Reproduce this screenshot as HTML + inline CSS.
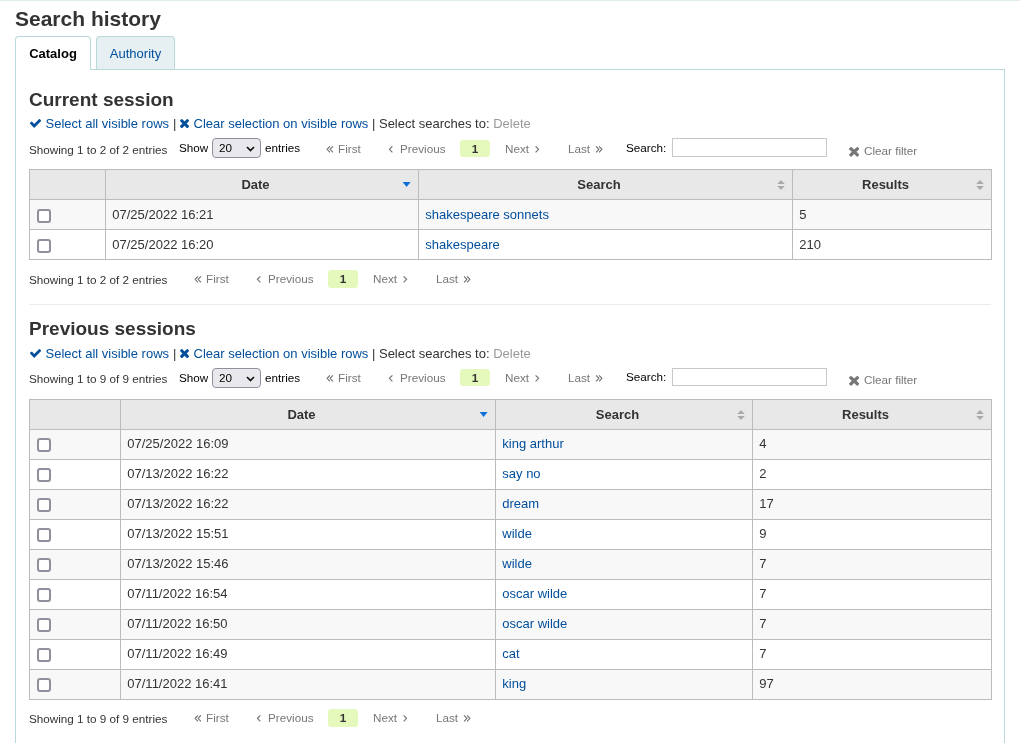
<!DOCTYPE html>
<html><head><meta charset="utf-8"><style>
*{box-sizing:border-box;}
html,body{margin:0;padding:0;background:#fff;}
body{font-family:"Liberation Sans",sans-serif;font-size:13px;color:#333;width:1020px;height:743px;overflow:hidden;position:relative;}
a{color:#004e9c;text-decoration:none;}
#wrap{position:absolute;left:0;top:0;width:1020px;height:743px;will-change:transform;}
.t{position:absolute;white-space:nowrap;}
.ic{position:absolute;}
.topline{position:absolute;left:0;top:0;width:1020px;height:1px;background:#e1eded;}
.h1{font-size:21px;font-weight:bold;line-height:26px;color:#333;}
.h2{font-size:19px;font-weight:bold;line-height:22px;color:#333;}
.lk{font-size:13px;line-height:16px;color:#333;}
.dis{color:#999;}
.sm{font-size:11.7px;line-height:16px;color:#333;}
.blk{color:#000;}
.gr{color:#777;}
.tab{position:absolute;top:36px;height:34px;border:1px solid #b9d8d9;border-bottom:none;border-radius:4px 4px 0 0;font-size:13px;line-height:34px;text-align:center;}
.tab1{left:15px;width:76px;background:#fff;color:#000;font-weight:bold;z-index:2;}
.tab2{left:96px;width:79px;height:33px;background:#e6f0f2;color:#004e9c;}
.panel{position:absolute;left:15px;top:69px;width:990px;height:700px;border:1px solid #b9d8d9;}
.sel{position:absolute;width:49px;height:20px;border:1px solid #8f8f9d;border-radius:4px;background:#e9e9ed;font-size:11.7px;line-height:18px;color:#000;}
.sel span{position:absolute;left:6px;top:0;}
.inp{position:absolute;width:155px;height:19px;border:1px solid #c8c8c8;background:#fff;}
.cur{position:absolute;width:30px;height:17px;line-height:17px;background:#e6f9bd;border-radius:3px;font-weight:bold;color:#333;text-align:center;font-size:11.7px;}
table{position:absolute;left:29px;border-collapse:collapse;table-layout:fixed;font-size:13px;width:962px;}
td,th{border:1px solid #bcbcbc;height:30px;padding:0 0 0 6.3px;text-align:left;color:#333;white-space:nowrap;}
th{background:#e8e8e8;font-weight:bold;text-align:center;position:relative;padding:0 20px 0 7px;}
tr.odd td{background:#f8f8f8;}
.cb{display:inline-block;width:14px;height:14px;border:2px solid #8f8f9d;border-radius:3px;vertical-align:middle;margin-left:0.7px;position:relative;top:1px;background:#fff;}
.si{position:absolute;right:7px;top:10px;}
.t2 td{padding-bottom:2px;}
.hr{position:absolute;left:29px;width:962px;height:1px;background:#ebebeb;}
</style></head><body><div id="wrap">
<div class="topline"></div>
<div class="t h1" style="left:15px;top:6px;">Search history</div>
<div class="tab tab1">Catalog</div><div class="tab tab2">Authority</div><div class="panel"></div>
<div class="t h2" style="left:29px;top:89px;">Current session</div><svg class="ic" style="left:30px;top:119.2px" width="11" height="8.6" viewBox="125 332 1533 1182" preserveAspectRatio="none"><g transform="translate(0,1536) scale(1,-1)"><path fill="#004e9c" d="M1671 970q0 40-28 68l-136 136q-28 28-68 28t-68-28l-656-657-294 295q-28 28-68 28t-68-28l-136-136q-28-28-28-68t28-68l362-362 136-136q28-28 68-28t68 28l136 136 724 724q28 28 28 68z"/></g></svg><div class="t lk" style="left:45.5px;top:116px;"><a>Select all visible rows</a></div><div class="t lk" style="left:173px;top:116px;">|</div><svg class="ic" style="left:180.3px;top:119.1px" width="9" height="9" viewBox="108 367 1182 1174" preserveAspectRatio="none"><g transform="translate(0,1536) scale(1,-1)"><path fill="#004e9c" d="M1298 214q0 40-28 68l-294 294 294 294q28 28 28 68t-28 68l-136 136q-28 28-68 28t-68-28l-294-294-294 294q-28 28-68 28t-68-28l-136-136q-28-28-28-68t28-68l294-294-294-294q-28-28-28-68t28-68l136-136q28-28 68-28t68 28l294 294 294-294q28-28 68-28t68 28l136 136q28 28 28 68z"/></g></svg><div class="t lk" style="left:193.5px;top:116px;"><a>Clear selection on visible rows</a> | Select searches to: <span class="dis">Delete</span></div><div class="t sm" style="left:29px;top:142px;">Showing 1 to 2 of 2 entries</div><div class="t sm blk" style="left:179px;top:140px;">Show</div><div class="sel" style="left:212px;top:138px"><span>20</span><svg width="9" height="6" viewBox="0 0 9 6" style="position:absolute;left:32.5px;top:6.6px"><path d="M1 1L4.5 4.5L8 1" fill="none" stroke="#111" stroke-width="1.7"/></svg></div><div class="t sm blk" style="left:265px;top:140px;">entries</div><svg class="ic" style="left:326px;top:145px" width="8" height="9" viewBox="0 0 8 9"><path d="M3.9 1.3L1.1 4.3L3.9 7.3M6.9 1.3L4.1 4.3L6.9 7.3" fill="none" stroke="#6f6f6f" stroke-width="1.1"/></svg><div class="t sm gr" style="left:338px;top:141px;">First</div><svg class="ic" style="left:388px;top:145px" width="6" height="9" viewBox="0 0 6 9"><path d="M4.4 1.3L1.4 4.3L4.4 7.3" fill="none" stroke="#6f6f6f" stroke-width="1.1"/></svg><div class="t sm gr" style="left:400px;top:141px;">Previous</div><div class="cur" style="left:460px;top:140px;height:17px">1</div><div class="t sm gr" style="left:505px;top:141px;">Next</div><svg class="ic" style="left:534px;top:145px" width="6" height="9" viewBox="0 0 6 9"><path d="M1.6 1.3L4.6 4.3L1.6 7.3" fill="none" stroke="#6f6f6f" stroke-width="1.1"/></svg><div class="t sm gr" style="left:568px;top:141px;">Last</div><svg class="ic" style="left:595px;top:145px" width="8" height="9" viewBox="0 0 8 9"><path d="M1.1 1.3L3.9 4.3L1.1 7.3M4.1 1.3L6.9 4.3L4.1 7.3" fill="none" stroke="#6f6f6f" stroke-width="1.1"/></svg><div class="t sm blk" style="left:626px;top:140px;">Search:</div><div class="inp" style="left:672px;top:138px;height:19px"></div><svg class="ic" style="left:848.75px;top:147.1px" width="10.2" height="9.6" viewBox="108 367 1182 1174" preserveAspectRatio="none"><g transform="translate(0,1536) scale(1,-1)"><path fill="#777" d="M1298 214q0 40-28 68l-294 294 294 294q28 28 28 68t-28 68l-136 136q-28 28-68 28t-68-28l-294-294-294 294q-28 28-68 28t-68-28l-136-136q-28-28-28-68t28-68l294-294-294-294q-28-28-28-68t28-68l136-136q28-28 68-28t68 28l294 294 294-294q28-28 68-28t68 28l136 136q28 28 28 68z"/></g></svg><div class="t sm gr" style="left:864px;top:143px;">Clear filter</div>
<table class="" style="top:169px"><colgroup><col style="width:76px"><col style="width:313px"><col style="width:374px"><col style="width:199px"></colgroup><tr><th></th><th>Date<svg class="si" width="8" height="11" viewBox="0 0 8 11" overflow="visible"><path d="M-0.4 2H7.6L3.6 6.9Z" fill="#0f6fd8"/></svg></th><th>Search<svg class="si" width="8" height="11" viewBox="0 0 8 11"><path d="M4 0L7.8 4.1H0.2Z M0.2 6H7.8L4 10.1Z" fill="#aaa"/></svg></th><th>Results<svg class="si" width="8" height="11" viewBox="0 0 8 11"><path d="M4 0L7.8 4.1H0.2Z M0.2 6H7.8L4 10.1Z" fill="#aaa"/></svg></th></tr><tr class="odd"><td><span class="cb"></span></td><td>07/25/2022 16:21</td><td><a>shakespeare sonnets</a></td><td>5</td></tr><tr><td><span class="cb"></span></td><td>07/25/2022 16:20</td><td><a>shakespeare</a></td><td>210</td></tr></table>
<div class="t sm" style="left:29px;top:272px;">Showing 1 to 2 of 2 entries</div>
<svg class="ic" style="left:194px;top:275px" width="8" height="9" viewBox="0 0 8 9"><path d="M3.9 1.3L1.1 4.3L3.9 7.3M6.9 1.3L4.1 4.3L6.9 7.3" fill="none" stroke="#6f6f6f" stroke-width="1.1"/></svg><div class="t sm gr" style="left:206px;top:271px;">First</div><svg class="ic" style="left:256px;top:275px" width="6" height="9" viewBox="0 0 6 9"><path d="M4.4 1.3L1.4 4.3L4.4 7.3" fill="none" stroke="#6f6f6f" stroke-width="1.1"/></svg><div class="t sm gr" style="left:268px;top:271px;">Previous</div><div class="cur" style="left:328px;top:270px;height:18px">1</div><div class="t sm gr" style="left:373px;top:271px;">Next</div><svg class="ic" style="left:402px;top:275px" width="6" height="9" viewBox="0 0 6 9"><path d="M1.6 1.3L4.6 4.3L1.6 7.3" fill="none" stroke="#6f6f6f" stroke-width="1.1"/></svg><div class="t sm gr" style="left:436px;top:271px;">Last</div><svg class="ic" style="left:463px;top:275px" width="8" height="9" viewBox="0 0 8 9"><path d="M1.1 1.3L3.9 4.3L1.1 7.3M4.1 1.3L6.9 4.3L4.1 7.3" fill="none" stroke="#6f6f6f" stroke-width="1.1"/></svg>
<div class="hr" style="top:304px"></div>
<div class="t h2" style="left:29px;top:318px;">Previous sessions</div><svg class="ic" style="left:30px;top:349.2px" width="11" height="8.6" viewBox="125 332 1533 1182" preserveAspectRatio="none"><g transform="translate(0,1536) scale(1,-1)"><path fill="#004e9c" d="M1671 970q0 40-28 68l-136 136q-28 28-68 28t-68-28l-656-657-294 295q-28 28-68 28t-68-28l-136-136q-28-28-28-68t28-68l362-362 136-136q28-28 68-28t68 28l136 136 724 724q28 28 28 68z"/></g></svg><div class="t lk" style="left:45.5px;top:346px;"><a>Select all visible rows</a></div><div class="t lk" style="left:173px;top:346px;">|</div><svg class="ic" style="left:180.3px;top:349.1px" width="9" height="9" viewBox="108 367 1182 1174" preserveAspectRatio="none"><g transform="translate(0,1536) scale(1,-1)"><path fill="#004e9c" d="M1298 214q0 40-28 68l-294 294 294 294q28 28 28 68t-28 68l-136 136q-28 28-68 28t-68-28l-294-294-294 294q-28 28-68 28t-68-28l-136-136q-28-28-28-68t28-68l294-294-294-294q-28-28-28-68t28-68l136-136q28-28 68-28t68 28l294 294 294-294q28-28 68-28t68 28l136 136q28 28 28 68z"/></g></svg><div class="t lk" style="left:193.5px;top:346px;"><a>Clear selection on visible rows</a> | Select searches to: <span class="dis">Delete</span></div><div class="t sm" style="left:29px;top:371px;">Showing 1 to 9 of 9 entries</div><div class="t sm blk" style="left:179px;top:370px;">Show</div><div class="sel" style="left:212px;top:368px"><span>20</span><svg width="9" height="6" viewBox="0 0 9 6" style="position:absolute;left:32.5px;top:6.6px"><path d="M1 1L4.5 4.5L8 1" fill="none" stroke="#111" stroke-width="1.7"/></svg></div><div class="t sm blk" style="left:265px;top:370px;">entries</div><svg class="ic" style="left:326px;top:374px" width="8" height="9" viewBox="0 0 8 9"><path d="M3.9 1.3L1.1 4.3L3.9 7.3M6.9 1.3L4.1 4.3L6.9 7.3" fill="none" stroke="#6f6f6f" stroke-width="1.1"/></svg><div class="t sm gr" style="left:338px;top:370px;">First</div><svg class="ic" style="left:388px;top:374px" width="6" height="9" viewBox="0 0 6 9"><path d="M4.4 1.3L1.4 4.3L4.4 7.3" fill="none" stroke="#6f6f6f" stroke-width="1.1"/></svg><div class="t sm gr" style="left:400px;top:370px;">Previous</div><div class="cur" style="left:460px;top:369px;height:17px">1</div><div class="t sm gr" style="left:505px;top:370px;">Next</div><svg class="ic" style="left:534px;top:374px" width="6" height="9" viewBox="0 0 6 9"><path d="M1.6 1.3L4.6 4.3L1.6 7.3" fill="none" stroke="#6f6f6f" stroke-width="1.1"/></svg><div class="t sm gr" style="left:568px;top:370px;">Last</div><svg class="ic" style="left:595px;top:374px" width="8" height="9" viewBox="0 0 8 9"><path d="M1.1 1.3L3.9 4.3L1.1 7.3M4.1 1.3L6.9 4.3L4.1 7.3" fill="none" stroke="#6f6f6f" stroke-width="1.1"/></svg><div class="t sm blk" style="left:626px;top:369px;">Search:</div><div class="inp" style="left:672px;top:368px;height:18px"></div><svg class="ic" style="left:848.75px;top:376.1px" width="10.2" height="9.6" viewBox="108 367 1182 1174" preserveAspectRatio="none"><g transform="translate(0,1536) scale(1,-1)"><path fill="#777" d="M1298 214q0 40-28 68l-294 294 294 294q28 28 28 68t-28 68l-136 136q-28 28-68 28t-68-28l-294-294-294 294q-28 28-68 28t-68-28l-136-136q-28-28-28-68t28-68l294-294-294-294q-28-28-28-68t28-68l136-136q28-28 68-28t68 28l294 294 294-294q28-28 68-28t68 28l136 136q28 28 28 68z"/></g></svg><div class="t sm gr" style="left:864px;top:372px;">Clear filter</div>
<table class="t2" style="top:399px"><colgroup><col style="width:91px"><col style="width:375px"><col style="width:257px"><col style="width:239px"></colgroup><tr><th></th><th>Date<svg class="si" width="8" height="11" viewBox="0 0 8 11" overflow="visible"><path d="M-0.4 2H7.6L3.6 6.9Z" fill="#0f6fd8"/></svg></th><th>Search<svg class="si" width="8" height="11" viewBox="0 0 8 11"><path d="M4 0L7.8 4.1H0.2Z M0.2 6H7.8L4 10.1Z" fill="#aaa"/></svg></th><th>Results<svg class="si" width="8" height="11" viewBox="0 0 8 11"><path d="M4 0L7.8 4.1H0.2Z M0.2 6H7.8L4 10.1Z" fill="#aaa"/></svg></th></tr><tr class="odd"><td><span class="cb"></span></td><td>07/25/2022 16:09</td><td><a>king arthur</a></td><td>4</td></tr><tr><td><span class="cb"></span></td><td>07/13/2022 16:22</td><td><a>say no</a></td><td>2</td></tr><tr class="odd"><td><span class="cb"></span></td><td>07/13/2022 16:22</td><td><a>dream</a></td><td>17</td></tr><tr><td><span class="cb"></span></td><td>07/13/2022 15:51</td><td><a>wilde</a></td><td>9</td></tr><tr class="odd"><td><span class="cb"></span></td><td>07/13/2022 15:46</td><td><a>wilde</a></td><td>7</td></tr><tr><td><span class="cb"></span></td><td>07/11/2022 16:54</td><td><a>oscar wilde</a></td><td>7</td></tr><tr class="odd"><td><span class="cb"></span></td><td>07/11/2022 16:50</td><td><a>oscar wilde</a></td><td>7</td></tr><tr><td><span class="cb"></span></td><td>07/11/2022 16:49</td><td><a>cat</a></td><td>7</td></tr><tr class="odd"><td><span class="cb"></span></td><td>07/11/2022 16:41</td><td><a>king</a></td><td>97</td></tr></table>
<div class="t sm" style="left:29px;top:711px;">Showing 1 to 9 of 9 entries</div>
<svg class="ic" style="left:194px;top:714px" width="8" height="9" viewBox="0 0 8 9"><path d="M3.9 1.3L1.1 4.3L3.9 7.3M6.9 1.3L4.1 4.3L6.9 7.3" fill="none" stroke="#6f6f6f" stroke-width="1.1"/></svg><div class="t sm gr" style="left:206px;top:710px;">First</div><svg class="ic" style="left:256px;top:714px" width="6" height="9" viewBox="0 0 6 9"><path d="M4.4 1.3L1.4 4.3L4.4 7.3" fill="none" stroke="#6f6f6f" stroke-width="1.1"/></svg><div class="t sm gr" style="left:268px;top:710px;">Previous</div><div class="cur" style="left:328px;top:709px;height:18px">1</div><div class="t sm gr" style="left:373px;top:710px;">Next</div><svg class="ic" style="left:402px;top:714px" width="6" height="9" viewBox="0 0 6 9"><path d="M1.6 1.3L4.6 4.3L1.6 7.3" fill="none" stroke="#6f6f6f" stroke-width="1.1"/></svg><div class="t sm gr" style="left:436px;top:710px;">Last</div><svg class="ic" style="left:463px;top:714px" width="8" height="9" viewBox="0 0 8 9"><path d="M1.1 1.3L3.9 4.3L1.1 7.3M4.1 1.3L6.9 4.3L4.1 7.3" fill="none" stroke="#6f6f6f" stroke-width="1.1"/></svg>
</div></body></html>
